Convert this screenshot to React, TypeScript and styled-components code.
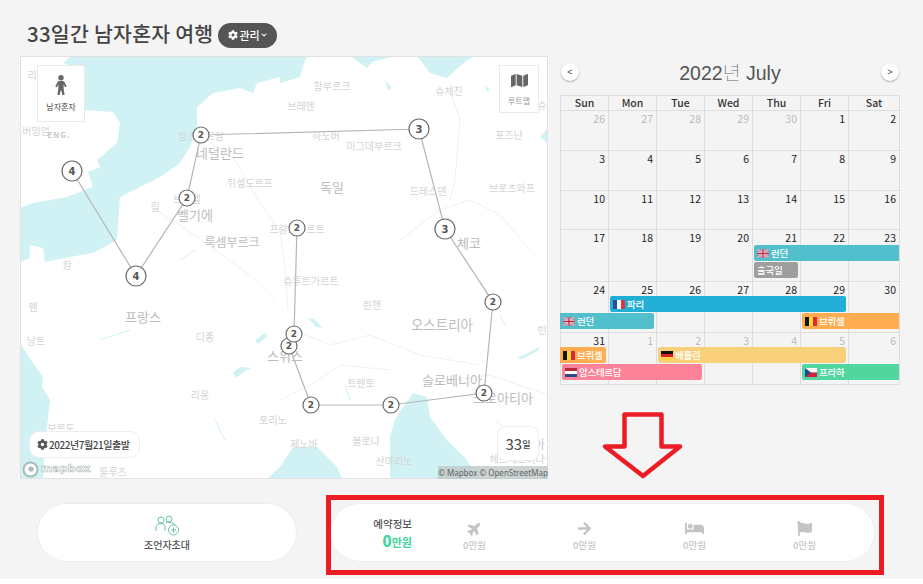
import React from "react";
import styled, { createGlobalStyle } from "styled-components";
import { FaCog, FaChevronDown, FaMap, FaPlane, FaArrowRight, FaBed, FaFlag } from "react-icons/fa";

const KR = `"Noto Sans CJK KR", "Noto Sans", sans-serif`;

const Global = createGlobalStyle`
  html, body { margin: 0; padding: 0; background: #fff; }
  body { font-family: ${KR}; }
`;

const Page = styled.div`
  position: relative;
  width: 923px;
  height: 579px;
  background: #f4f4f4;
  overflow: hidden;
`;
const TitleRow = styled.div`
  display: flex;
  align-items: center;
  gap: 5px;
  height: 56px;
  padding: 14px 0 0 27px;
  box-sizing: border-box;
`;
const Title = styled.h1`
  margin: 0;
  font-size: 20.5px;
  font-weight: 500;
  line-height: 26px;
  letter-spacing: 0.25px;
  color: #444;
  position: relative;
  top: -2px;
`;
const ManageButton = styled.button`
  display: flex;
  align-items: center;
  gap: 1px;
  width: 59px;
  height: 25px;
  padding: 0 0 0 10px;
  border: 0;
  border-radius: 13px;
  background: #555;
  color: #fff;
  font: 500 11px ${KR};
`;
const MainRow = styled.div`
  display: flex;
  gap: 12px;
  padding-left: 20px;
`;
const MapPanel = styled.div`
  position: relative;
  width: 528px;
  height: 423px;
  background: #fff;
  outline: 1px solid #e2e2e2;
  outline-offset: -1px;
  overflow: hidden;
  flex: none;
`;
const MapArt = styled.svg`
  display: block;
  width: 528px;
  height: 423px;
`;
const Place = styled.text<{ $size?: number; $tone?: string }>`
  font-family: ${KR};
  font-size: ${(p) => p.$size ?? 10}px;
  fill: ${(p) => p.$tone ?? "#d4d4d4"};
  text-anchor: middle;
  dominant-baseline: central;
`;
const Digit = styled.text<{ $size: number }>`
  font-family: "DejaVu Sans", sans-serif;
  font-weight: 700;
  font-size: ${(p) => p.$size}px;
  fill: #555;
  text-anchor: middle;
  dominant-baseline: central;
`;
const MapCard = styled.div<{ $top: number; $side: string; $w: number; $h: number; $tone: string }>`
  position: absolute;
  top: ${(p) => p.$top}px;
  ${(p) => p.$side};
  width: ${(p) => p.$w}px;
  height: ${(p) => p.$h}px;
  box-sizing: border-box;
  background: #fff;
  border: 1px solid #eaeaea;
  display: flex;
  flex-direction: column;
  align-items: center;
  justify-content: center;
  gap: 6px;
  color: ${(p) => p.$tone};
  font-size: 8px;
  line-height: 11px;
`;
const IconTint = styled.span<{ $c: string }>`
  display: flex;
  color: ${(p) => p.$c};
`;
const DepartPill = styled.div`
  position: absolute;
  left: 9px;
  bottom: 21px;
  display: flex;
  align-items: center;
  gap: 1px;
  height: 27px;
  padding: 0 7px;
  box-sizing: border-box;
  width: 111px;
  background: #fff;
  border: 1px solid #eee;
  border-radius: 10px;
  color: #444;
  font-size: 10px;
  letter-spacing: -0.45px;
  font-weight: 500;
  white-space: nowrap;
`;
const DaysCard = styled.div`
  position: absolute;
  right: 9px;
  bottom: 18px;
  width: 42px;
  height: 35px;
  box-sizing: border-box;
  background: #fff;
  border: 1px solid #eee;
  border-radius: 8px;
  display: flex;
  align-items: center;
  justify-content: center;
  color: #444;
  font-size: 15px;
  small { font-size: 9px; font-weight: 500; margin-top: 2px; }
`;
const Attribution = styled.div`
  position: absolute;
  right: 0;
  bottom: 0;
  width: 110px;
  height: 13px;
  background: rgba(190, 200, 200, 0.8);
  color: #666;
  font: 8px/13px "Noto Sans", sans-serif;
  text-align: center;
  white-space: nowrap;
`;
const MapboxLogo = styled.div`
  position: absolute;
  left: 2px;
  bottom: 1px;
  display: flex;
  align-items: center;
  gap: 2px;
  color: #fff;
  font: 700 11px/18px "DejaVu Sans", sans-serif;
  -webkit-text-stroke: 0.6px #a9b6b6;
`;

const Calendar = styled.div`
  width: 340px;
  flex: none;
`;
const CalHead = styled.div`
  display: flex;
  align-items: center;
  justify-content: space-between;
  height: 39px;
  padding: 0 1px 7px;
  box-sizing: border-box;
`;
const NavButton = styled.button`
  width: 18px;
  height: 18px;
  padding: 0;
  border: 0;
  border-radius: 50%;
  background: #fff;
  box-shadow: 0 1px 2px rgba(0, 0, 0, 0.3);
  color: #444;
  font: 9px/18px "Liberation Sans", sans-serif;
`;
const Month = styled.div`
  font: 19.5px/26px "Liberation Sans", "Noto Sans CJK KR", sans-serif;
  color: #555;
`;
const MonthUnit = styled.span`
  font-family: ${KR};
  font-weight: 100;
  color: #666;
`;
const Table = styled.div`
  border-right: 1px solid #ddd;
  border-bottom: 1px solid #ddd;
  width: 339px;
  box-sizing: content-box;
`;
const Cols = `grid-template-columns: repeat(6, 48px) 51px;`;
const DayNames = styled.div`
  display: grid;
  ${Cols}
`;
const DayName = styled.div`
  box-sizing: border-box;
  height: 15px;
  border-left: 1px solid #ddd;
  border-top: 1px solid #ddd;
  text-align: center;
  font-size: 10.5px;
  font-weight: 500;
  line-height: 14px;
  color: #333;
`;
const Week = styled.div<{ $h: number }>`
  position: relative;
  display: grid;
  ${Cols}
  height: ${(p) => p.$h}px;
`;
const Day = styled.div<{ $muted?: boolean }>`
  box-sizing: border-box;
  border-left: 1px solid #ddd;
  border-top: 1px solid #ddd;
  padding-right: 3px;
  text-align: right;
  font-size: 10.5px;
  line-height: 15px;
  color: ${(p) => (p.$muted ? "#bbb" : "#222")};
`;
const EventLayer = styled.div<{ $top: number }>`
  position: absolute;
  inset: 0;
  display: grid;
  ${Cols}
  grid-auto-rows: 17px;
  padding-top: ${(p) => p.$top}px;
`;
const Event = styled.div<{ $c: string; $col: string; $row: number; $ml: number; $mr: number }>`
  grid-column: ${(p) => p.$col};
  grid-row: ${(p) => p.$row};
  height: 16px;
  margin: 0 ${(p) => p.$mr}px 0 ${(p) => p.$ml}px;
  padding-left: 3px;
  display: flex;
  align-items: center;
  gap: 1px;
  background: ${(p) => p.$c};
  border-radius: ${(p) => (p.$ml ? 2 : 0)}px ${(p) => (p.$mr ? 2 : 0)}px ${(p) => (p.$mr ? 2 : 0)}px ${(p) => (p.$ml ? 2 : 0)}px;
  color: #fff;
  font-size: 9.5px;
  font-weight: 500;
  letter-spacing: -0.3px;
  white-space: nowrap;
  overflow: hidden;
`;

const BottomRow = styled.div`
  display: flex;
  gap: 33px;
  padding: 24px 0 0 37px;
`;
const InvitePill = styled.div`
  width: 260px;
  height: 59px;
  box-sizing: border-box;
  background: #fff;
  border: 1px solid #eee;
  border-radius: 30px;
  display: flex;
  flex-direction: column;
  align-items: center;
  justify-content: center;
  color: #555;
  font-size: 10px;
  font-weight: 500;
  line-height: 13px;
  gap: 2px;
`;
const CostPill = styled.div`
  width: 545px;
  height: 59px;
  box-sizing: border-box;
  background: #fff;
  border: 1px solid #eee;
  border-radius: 30px;
  padding-left: 33px;
  display: grid;
  grid-template-columns: 110px repeat(4, 110px);
  align-items: center;
`;
const Total = styled.div`
  display: flex;
  flex-direction: column;
  align-items: flex-end;
  width: 48px;
  margin-top: 3px;
  color: #555;
  font-size: 10.5px;
  font-weight: 500;
  line-height: 15px;
`;
const TotalValue = styled.div`
  color: #3fd69b;
  font-size: 11px;
  font-weight: 700;
  line-height: 20px;
  b { font-size: 15px; }
`;
const Cost = styled.div`
  display: flex;
  flex-direction: column;
  align-items: center;
  gap: 3px;
  height: 32px;
  margin-top: 7px;
  color: #c6c6c6;
  font-size: 9.5px;
  font-weight: 500;
  line-height: 12px;
  margin-left: -109px;
`;
const CostIcon = styled.span`
  display: flex;
  align-items: center;
  justify-content: center;
  height: 16px;
  color: #c4c4c4;
`;
const Annotation = styled.div`
  position: absolute;
  left: 326px;
  top: 495px;
  width: 558px;
  height: 80px;
  box-sizing: border-box;
  border: 5px solid #ed1c24;
`;
const ArrowArt = styled.svg`
  position: absolute;
  left: 600px;
  top: 410px;
`;

type FlagKind = "uk" | "fr" | "be" | "de" | "nl" | "cz";
function Flag({ kind }: { kind: FlagKind }) {
  return (
    <svg width="12" height="9" viewBox="0 0 12 9" style={{ flex: "none", marginRight: 1 }}>
      {kind === "uk" && (
        <>
          <rect width="12" height="9" fill="#8a8fae" />
          <path d="M0 0L12 9M12 0L0 9" stroke="#e8dfe4" strokeWidth="1.6" />
          <path d="M0 0L12 9M12 0L0 9" stroke="#c45a6c" strokeWidth=".6" />
          <path d="M6 0V9M0 4.5H12" stroke="#eee" strokeWidth="2.6" />
          <path d="M6 0V9M0 4.5H12" stroke="#c8283e" strokeWidth="1.4" />
        </>
      )}
      {kind === "fr" && (
        <>
          <rect width="4" height="9" fill="#2b4b9b" />
          <rect x="4" width="4" height="9" fill="#fff" />
          <rect x="8" width="4" height="9" fill="#e0343f" />
        </>
      )}
      {kind === "be" && (
        <>
          <rect width="4" height="9" fill="#111" />
          <rect x="4" width="4" height="9" fill="#fbd92f" />
          <rect x="8" width="4" height="9" fill="#e0263a" />
        </>
      )}
      {kind === "de" && (
        <>
          <rect width="12" height="3" fill="#111" />
          <rect y="3" width="12" height="3" fill="#d8232a" />
          <rect y="6" width="12" height="3" fill="#f8d24a" />
        </>
      )}
      {kind === "nl" && (
        <>
          <rect width="12" height="3" fill="#b9283c" />
          <rect y="3" width="12" height="3" fill="#fff" />
          <rect y="6" width="12" height="3" fill="#2b4b8b" />
        </>
      )}
      {kind === "cz" && (
        <>
          <rect width="12" height="4.5" fill="#fff" />
          <rect y="4.5" width="12" height="4.5" fill="#d3233a" />
          <path d="M0 0L6 4.5L0 9Z" fill="#1f4a85" />
        </>
      )}
    </svg>
  );
}

const big = "#bcbcbc";
const labels: [string, number, number, number?, string?][] = [
  ["리", 32, 74], ["버밍엄", 36, 130], ["암스테르담", 201, 135], ["네덜란드", 220, 152, 13, big],
  ["뒤셀도르프", 250, 182], ["릴", 155, 206], ["브뤼셀", 187, 198], ["벨기에", 195, 214, 13, big],
  ["룩셈부르크", 232, 241, 12, big], ["브레멘", 301, 105], ["함부르크", 332, 85], ["슈체친", 449, 90],
  ["하노버", 326, 135], ["마그데부르크", 374, 145], ["독일", 332, 186, 13, big], ["드레스덴", 428, 190],
  ["포즈난", 509, 134], ["브로츠와프", 512, 187], ["체코", 469, 242, 13, big], ["프랑크푸르트", 297, 228],
  ["슈", 542, 104], ["캉", 67, 264], ["렌", 33, 306], ["낭트", 36, 340], ["프랑스", 143, 316, 13, big],
  ["디종", 205, 336], ["리옹", 200, 394], ["보르도", 61, 427], ["툴루즈", 113, 471], ["토리노", 273, 419],
  ["스위스", 285, 355, 13, big], ["슈투트가르트", 311, 280], ["뮌헨", 372, 304],
  ["오스트리아", 442, 324, 13.5, big], ["슬로베니아", 452, 379, 13, big],
  ["크로아티아", 503, 397, 13, big], ["트렌토", 361, 382], ["볼로냐", 366, 440], ["제노바", 304, 443],
  ["산마리노", 394, 460], ["보스니아", 523, 443, 12, "#c8c8c8"], ["헤르체고비나", 517, 458, 10], ["빈", 542, 329],
];

const markers: [string, number, number, boolean][] = [
  ["2", 201, 135, false], ["3", 419, 129, true], ["3", 445, 229, true], ["2", 493, 302, false],
  ["2", 484, 393, false], ["2", 391, 405, false], ["2", 311, 405, false], ["2", 289, 346, false],
  ["2", 294, 334, false], ["2", 297, 228, false], ["2", 187, 198, false], ["4", 72, 171, true], ["4", 136, 276, true],
];

function MapDrawing() {
  const water = "#d0f2f4";
  const border = "#eaf3f4";
  return (
    <MapArt viewBox="20 56 528 423">
      <path
        fill={water}
        d="M71 56L63 63L72 66L85 75V110L113 112L120 123L117 143L97 160L100 167L88 172L93 187L67 197L33 203L20 208V262L30 258L30 245L43 248L45 262L70 257L93 253L117 240L120 197L140 187L160 177L180 163L190 147L197 127L197 107L213 93L240 88L253 93L257 83L280 77L280 83L300 77L305 60L308 56Z"
      />
      <path fill={water} d="M20 343L33 363L43 377L42 387L50 400L47 427L45 447L43 479H20Z" />
      <path fill={water} d="M267 479L280 467L293 447L317 447L337 467L342 479Z" />
      <path fill={water} d="M390 479L390 437L395 420L403 407L413 393L427 397L430 417L447 440L467 460L477 479Z" />
      <path fill={water} d="M350 56L353 58L367 68L372 62L395 56Z M417 56L430 73L447 78L467 60L476 56Z" />
      <path fill={water} d="M233 373L240 367L252 368L245 371L236 378Z M308 318L314 319L323 328L316 327Z M517 358L530 352L540 346L538 351L522 359Z M255 340L265 333L268 336L258 344Z" />
      <path fill={water} d="M540 137L548 128V144Z M385 80L392 88L388 90Z M485 85L490 90L487 92Z" />
      <path
        fill="none"
        stroke={border}
        strokeWidth="1"
        d="M195 132L235 160L258 200L280 232L285 270L288 310M156 210L180 225L215 250L250 275L275 300M295 330L330 345L370 335L420 355L480 365M400 240L440 210L470 200L500 215L530 250M280 400L310 385L340 365L390 370M430 383L490 375L548 395M495 420L548 460M450 90L460 120L455 180L450 200"
      />
      <path fill="none" stroke={water} strokeWidth="1" d="M100 340L130 330M345 385L350 400M480 282L490 300M500 315L505 325M180 260L195 250M215 420L225 440" />
      <polyline
        fill="none"
        stroke="#b5b5b5"
        strokeWidth="1.2"
        points="72,171 136,276 187,198 201,135 419,129 445,229 493,302 484,393 391,405 311,405 289,346 294,334 297,228"
      />
      {labels.map(([t, x, y, s, c], i) => (
        <Place key={i} x={x} y={y} $size={s} $tone={c}>{t}</Place>
      ))}
      <Place x={59} y={134} $size={8} $tone="#c8c8c8" style={{ fontWeight: 700, letterSpacing: 1 }}>ENG.</Place>
      {markers.map(([d, x, y, large], i) => (
        <g key={i}>
          <circle cx={x} cy={y} r={large ? 10 : 8} fill="#fff" stroke="#6b6b6b" strokeWidth="1.2" />
          <Digit x={x} y={y} $size={large ? 10 : 9}>{d}</Digit>
        </g>
      ))}
    </MapArt>
  );
}

const weeks: { h: number; top: number; days: [number, boolean?][]; events: [string, string, number, number, number, string, FlagKind?][] }[] = [
  { h: 40, top: 0, days: [[26, true], [27, true], [28, true], [29, true], [30, true], [1], [2]], events: [] },
  { h: 40, top: 0, days: [[3], [4], [5], [6], [7], [8], [9]], events: [] },
  { h: 39, top: 0, days: [[10], [11], [12], [13], [14], [15], [16]], events: [] },
  {
    h: 52, top: 16, days: [[17], [18], [19], [20], [21], [22], [23]],
    events: [
      ["#52bfcc", "5 / span 3", 1, 2, 0, "런던", "uk"],
      ["#9e9e9e", "5 / span 1", 2, 2, 2, "출국일"],
    ],
  },
  {
    h: 51, top: 15, days: [[24], [25], [26], [27], [28], [29], [30]],
    events: [
      ["#22afd6", "2 / span 5", 1, 2, 2, "파리", "fr"],
      ["#52bfcc", "1 / span 2", 2, 0, 2, "런던", "uk"],
      ["#ffad50", "6 / span 2", 2, 2, 0, "브뤼셀", "be"],
    ],
  },
  {
    h: 52, top: 15, days: [[31], [1, true], [2, true], [3, true], [4, true], [5, true], [6, true]],
    events: [
      ["#ffad50", "1 / span 1", 1, 0, 2, "브뤼셀", "be"],
      ["#f8d07a", "3 / span 4", 1, 2, 2, "베를린", "de"],
      ["#ff8398", "1 / span 3", 2, 2, 2, "암스테르담", "nl"],
      ["#52d6a0", "6 / span 2", 2, 2, 0, "프라하", "cz"],
    ],
  },
];

export default function App() {
  return (
    <>
      <Global />
      <Page>
        <TitleRow>
          <Title>33일간 남자혼자 여행</Title>
          <ManageButton>
            <FaCog size={10} />
            관리
            <FaChevronDown size={6} />
          </ManageButton>
        </TitleRow>
        <MainRow>
          <MapPanel>
            <MapDrawing />
            <MapCard $top={9} $side="left: 17px" $w={48} $h={57} $tone="#444">
              <svg width="12" height="20" viewBox="0 0 12 20" fill="#666">
                <circle cx="6" cy="2.8" r="2.7" />
                <path d="M0.3 11.5L2.6 7C3 6.2 3.8 6 4.6 6H7.4C8.2 6 9 6.2 9.4 7L11.7 11.5L10.2 12.3L8.6 9.6V13L9.6 20H7.4L6 14.5L4.6 20H2.4L3.4 13V9.6L1.8 12.3Z" />
              </svg>
              남자혼자
            </MapCard>
            <MapCard $top={9} $side="right: 9px" $w={40} $h={48} $tone="#999">
              <IconTint $c="#666"><FaMap size={17} /></IconTint>
              루트맵
            </MapCard>
            <DepartPill>
              <FaCog size={11} color="#555" />
              2022년7월21일출발
            </DepartPill>
            <DaysCard>33<small>일</small></DaysCard>
            <MapboxLogo>
              <svg width="17" height="17" viewBox="0 0 17 17">
                <circle cx="8.5" cy="8.5" r="7" fill="#fff" stroke="#a9bcbc" strokeWidth="2" />
                <circle cx="9" cy="8" r="2.6" fill="#a9bcbc" />
              </svg>
              mapbox
            </MapboxLogo>
            <Attribution>© Mapbox © OpenStreetMap</Attribution>
          </MapPanel>
          <Calendar>
            <CalHead>
              <NavButton>&lt;</NavButton>
              <Month>2022<MonthUnit>년</MonthUnit> July</Month>
              <NavButton>&gt;</NavButton>
            </CalHead>
            <Table>
              <DayNames>
                {["Sun", "Mon", "Tue", "Wed", "Thu", "Fri", "Sat"].map((d) => (
                  <DayName key={d}>{d}</DayName>
                ))}
              </DayNames>
              {weeks.map((w, i) => (
                <Week key={i} $h={w.h}>
                  {w.days.map(([n, muted], j) => (
                    <Day key={j} $muted={muted}>{n}</Day>
                  ))}
                  {w.events.length > 0 && (
                    <EventLayer $top={w.top}>
                      {w.events.map(([c, col, row, ml, mr, text, flag], k) => (
                        <Event key={k} $c={c} $col={col} $row={row} $ml={ml} $mr={mr}>
                          {flag && <Flag kind={flag} />}
                          {text}
                        </Event>
                      ))}
                    </EventLayer>
                  )}
                </Week>
              ))}
            </Table>
          </Calendar>
        </MainRow>
        <BottomRow>
          <InvitePill>
            <svg width="26" height="21" viewBox="0 0 26 21" fill="none" stroke="#6cc3a0" strokeWidth="1">
              <circle cx="7" cy="5" r="3" />
              <circle cx="15" cy="4" r="3" />
              <path d="M2 16V12C2 9.5 4 8.5 7 8.5C10 8.5 11 10 11 12V16" />
              <path d="M12 8C13 7.5 14 7.5 15 7.5C18 7.5 20 8.5 21 10" />
              <circle cx="19.5" cy="15" r="5" fill="#fff" />
              <path d="M19.5 12.5V17.5M17 15H22" />
            </svg>
            조언자초대
          </InvitePill>
          <CostPill>
            <Total>
              예약정보
              <TotalValue><b>0</b>만원</TotalValue>
            </Total>
            <Cost>
              <CostIcon><FaPlane size={15} style={{ transform: "rotate(-45deg)" }} /></CostIcon>
              0만원
            </Cost>
            <Cost>
              <CostIcon><FaArrowRight size={15} /></CostIcon>
              0만원
            </Cost>
            <Cost>
              <CostIcon><FaBed size={19} /></CostIcon>
              0만원
            </Cost>
            <Cost>
              <CostIcon><FaFlag size={15} /></CostIcon>
              0만원
            </Cost>
          </CostPill>
        </BottomRow>
        <Annotation />
        <ArrowArt width="86" height="72" viewBox="600 410 86 72">
          <path d="M624.5 414.5H661.5V446.5H680L643 476L605 446.5H624.5Z" fill="none" stroke="#ed1c24" strokeWidth="4.5" strokeLinejoin="round" />
        </ArrowArt>
      </Page>
    </>
  );
}
